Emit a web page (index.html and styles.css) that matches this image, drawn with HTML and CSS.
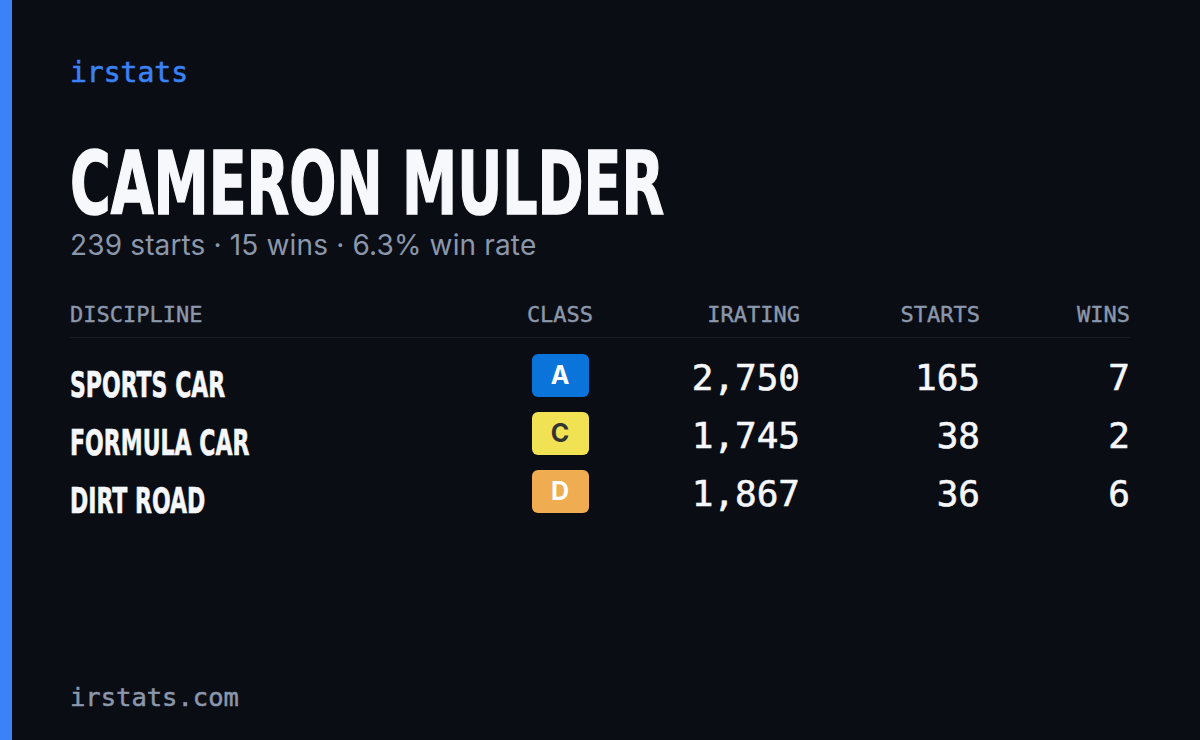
FILE: index.html
```html
<!DOCTYPE html>
<html lang="en">
<head>
<meta charset="utf-8">
<title>irstats – Cameron Mulder</title>
<link rel="stylesheet" href="styles.css">
</head>
<body>
<div class="card">
  <div class="accent"></div>
  <main class="content">
    <div class="logo">irstats</div>
    <h1 class="name"><span class="cond">CAMERON MULDER</span></h1>
    <p class="summary">239 starts · 15 wins · 6.3% win rate</p>

    <div class="table">
      <div class="row head">
        <div class="c-disc">Discipline</div>
        <div class="c-class">Class</div>
        <div class="c-num">iRating</div>
        <div class="c-num">Starts</div>
        <div class="c-num">Wins</div>
      </div>
      <div class="body">
        <div class="row">
          <div class="c-disc"><span class="cond disc">SPORTS CAR</span></div>
          <div class="c-class"><span class="badge badge-a">A</span></div>
          <div class="c-num val">2,750</div>
          <div class="c-num val">165</div>
          <div class="c-num val">7</div>
        </div>
        <div class="row">
          <div class="c-disc"><span class="cond disc">FORMULA CAR</span></div>
          <div class="c-class"><span class="badge badge-c">C</span></div>
          <div class="c-num val">1,745</div>
          <div class="c-num val">38</div>
          <div class="c-num val">2</div>
        </div>
        <div class="row">
          <div class="c-disc"><span class="cond disc">DIRT ROAD</span></div>
          <div class="c-class"><span class="badge badge-d">D</span></div>
          <div class="c-num val">1,867</div>
          <div class="c-num val">36</div>
          <div class="c-num val">6</div>
        </div>
      </div>
    </div>

    <div class="footer">irstats.com</div>
  </main>
</div>
</body>
</html>
```

FILE: styles.css
```css
* { box-sizing: border-box; }

html, body {
  margin: 0;
  padding: 0;
  background: #0a0d14;
}

body {
  width: 1200px;
  height: 740px;
  overflow: hidden;
  font-family: "Inter", "Noto Sans", sans-serif;
  color: #f5f7fa;
}

.card {
  display: flex;
  height: 740px;
}

.accent {
  width: 12px;
  flex: none;
  background: #3b82f6;
}

.content {
  flex: 1;
  display: flex;
  flex-direction: column;
  padding: 59px 70px 30px 58px;
}

.logo {
  font-family: "DejaVu Sans Mono", "Liberation Mono", monospace;
  font-size: 28px;
  line-height: 1;
  color: #3b82f6;
  height: 28px;
  -webkit-text-stroke: 0.6px #3b82f6;
}

.cond {
  display: inline-block;
  font-family: "DejaVu Sans Condensed", "Liberation Sans", sans-serif;
  font-weight: 700;
  transform-origin: left center;
  transform: scaleX(0.7);
  white-space: nowrap;
}

.name {
  margin: 51px 0 0 0;
  font-size: 88px;
  line-height: 80px;
  height: 88px;
  padding-top: 4px;
  font-weight: 700;
  color: #f7f8fb;
}

.name .cond {
  -webkit-text-stroke: 1.5px #f7f8fb;
}

.summary {
  margin: 2px 0 0 0;
  font-family: "Inter", "Noto Sans", sans-serif;
  font-size: 28px;
  line-height: 34px;
  color: #8b97ab;
  letter-spacing: 0.15px;
}

.table {
  margin-top: 41px;
}

.row {
  display: grid;
  grid-template-columns: 430px 120px 180px 180px 150px;
  align-items: center;
}

.head {
  font-family: "DejaVu Sans Mono", "Liberation Mono", monospace;
  font-size: 22px;
  line-height: 24px;
  text-transform: uppercase;
  color: #8b97ab;
  padding-bottom: 10px;
  border-bottom: 1px solid #1b1f2a;
  -webkit-text-stroke: 0.4px #8b97ab;
}

.body {
  padding-top: 8px;
}

.body .row {
  height: 58px;
}

.c-class { text-align: center; }
.c-num { text-align: right; }

.disc {
  font-size: 36px;
  line-height: 36px;
  color: #f5f7fa;
  transform: scaleX(0.68);
  position: relative;
  top: 10px;
  -webkit-text-stroke: 0.6px #f5f7fa;
}

.val {
  font-family: "DejaVu Sans Mono", "Liberation Mono", monospace;
  font-size: 36px;
  line-height: 36px;
  color: #f5f7fa;
  position: relative;
  top: 3px;
  -webkit-text-stroke: 0.6px #f5f7fa;
}

.badge {
  display: inline-flex;
  align-items: center;
  justify-content: center;
  width: 57px;
  height: 43px;
  border-radius: 6px;
  font-family: "Inter", "Noto Sans", sans-serif;
  font-weight: 700;
  font-size: 25px;
  line-height: 1;
}

.badge-a { background: #0a74da; color: #ffffff; }
.badge-c { background: #f0e252; color: #333333; }
.badge-d { background: #f0ac50; color: #ffffff; }

.footer {
  margin-top: auto;
  font-family: "DejaVu Sans Mono", "Liberation Mono", monospace;
  font-size: 25.5px;
  line-height: 1;
  color: #8b97ab;
  -webkit-text-stroke: 0.5px #8b97ab;
}
```
